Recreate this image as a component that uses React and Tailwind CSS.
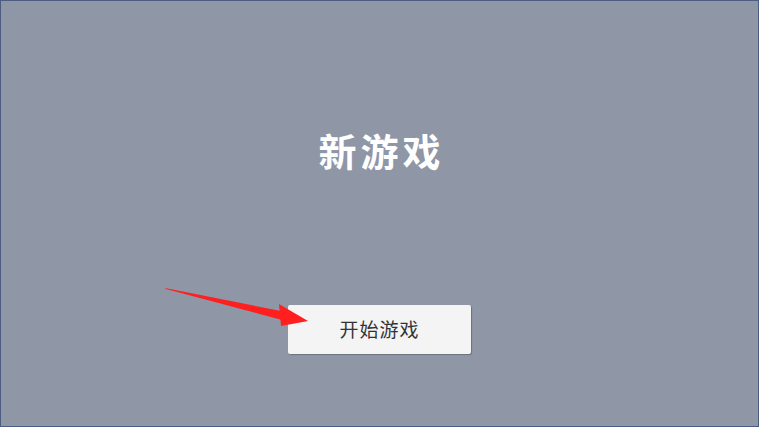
export default function App() {
  return (
    <div className="relative w-[759px] h-[427px] bg-[#8f96a6] border border-[#4d5d82] flex flex-col items-center" style={{ fontFamily: '"Noto Sans CJK SC", "Noto Sans", sans-serif' }}>
      <h1 className="mt-[122px] text-[38px] leading-[54px] font-bold text-white tracking-[4px] pl-[4px]">新游戏</h1>
      <button className="mt-[128px] w-[183px] h-[49px] bg-[#f4f4f4] rounded-[2px] shadow-[1px_1px_1px_rgba(0,0,0,0.25)] text-[19px] text-[#333] tracking-[1px] flex items-center justify-center">
        开始游戏
      </button>
      <svg className="absolute left-0 top-0 pointer-events-none" width="759" height="427" viewBox="0 0 759 427">
        <polygon points="164,287 285,311 281,319 165,288" fill="#ff1f1f" />
        <polygon points="278,303 307,320 280,325" fill="#ff1f1f" />
      </svg>
    </div>
  );
}
